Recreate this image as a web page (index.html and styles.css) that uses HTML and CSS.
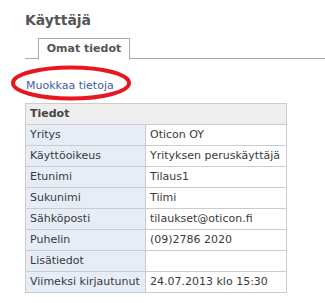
FILE: index.html
```html
<!DOCTYPE html>
<html lang="fi">
<head>
<meta charset="utf-8">
<link rel="stylesheet" href="styles.css">
</head>
<body>
<div class="page">
  <h1 class="title">Käyttäjä</h1>
  <div class="tabs">
    <div class="tab">Omat tiedot</div>
  </div>
  <div class="edit-row">
    <a class="edit-link" href="#">Muokkaa tietoja</a>
    <svg class="ring" width="124" height="38" viewBox="0 0 124 38">
      <ellipse cx="61" cy="18" rx="58" ry="15.5" fill="none" stroke="#e8161e" stroke-width="4"/>
    </svg>
  </div>
  <table class="info">
    <colgroup>
      <col class="c-lbl">
      <col class="c-val">
    </colgroup>
    <thead>
      <tr><th colspan="2">Tiedot</th></tr>
    </thead>
    <tbody>
      <tr><td class="lbl">Yritys</td><td>Oticon OY</td></tr>
      <tr><td class="lbl">Käyttöoikeus</td><td>Yrityksen peruskäyttäjä</td></tr>
      <tr><td class="lbl">Etunimi</td><td>Tilaus1</td></tr>
      <tr><td class="lbl">Sukunimi</td><td>Tiimi</td></tr>
      <tr><td class="lbl">Sähköposti</td><td>tilaukset@oticon.fi</td></tr>
      <tr><td class="lbl">Puhelin</td><td>(09)2786 2020</td></tr>
      <tr><td class="lbl">Lisätiedot</td><td></td></tr>
      <tr><td class="lbl">Viimeksi kirjautunut</td><td>24.07.2013 klo 15:30</td></tr>
    </tbody>
  </table>
</div>
</body>
</html>
```

FILE: styles.css
```css
html, body {
  margin: 0;
  padding: 0;
  background: #fff;
}
.page {
  padding: 10px 0 0 25px;
  font-family: "DejaVu Sans", Verdana, sans-serif;
  font-size: 11px;
  color: #3a3a3a;
}
.title {
  margin: 0;
  font-size: 14px;
  line-height: 20px;
  font-weight: bold;
  color: #555;
}
.tabs {
  margin-top: 8px;
  border-bottom: 1px solid #a8a8a8;
  display: flex;
  padding-left: 13px;
  height: 20px;
}
.tab {
  width: 90px;
  height: 20px;
  border: 1px solid #a8a8a8;
  border-bottom: 1px solid #fff;
  background: #fff;
  font-weight: bold;
  color: #555;
  text-align: center;
  line-height: 19px;
}
.edit-row {
  position: relative;
  margin-top: 20px;
  height: 24px;
}
.edit-link {
  display: block;
  color: #3d5ca8;
  text-decoration: none;
  line-height: 14px;
  padding-left: 1px;
}
.ring {
  position: absolute;
  left: -15px;
  top: -14px;
}
.info {
  border-collapse: collapse;
  width: 261px;
  table-layout: fixed;
}
.c-lbl { width: 120px; }
.c-val { width: 141px; }
.info th, .info td {
  border: 1px solid #cccccc;
  padding: 0 4px;
  text-align: left;
  white-space: nowrap;
  line-height: 20px;
}
.info th {
  background: #eeeeee;
  font-weight: bold;
  color: #444;
}
.info td.lbl {
  background: #e6edf7;
}
```
